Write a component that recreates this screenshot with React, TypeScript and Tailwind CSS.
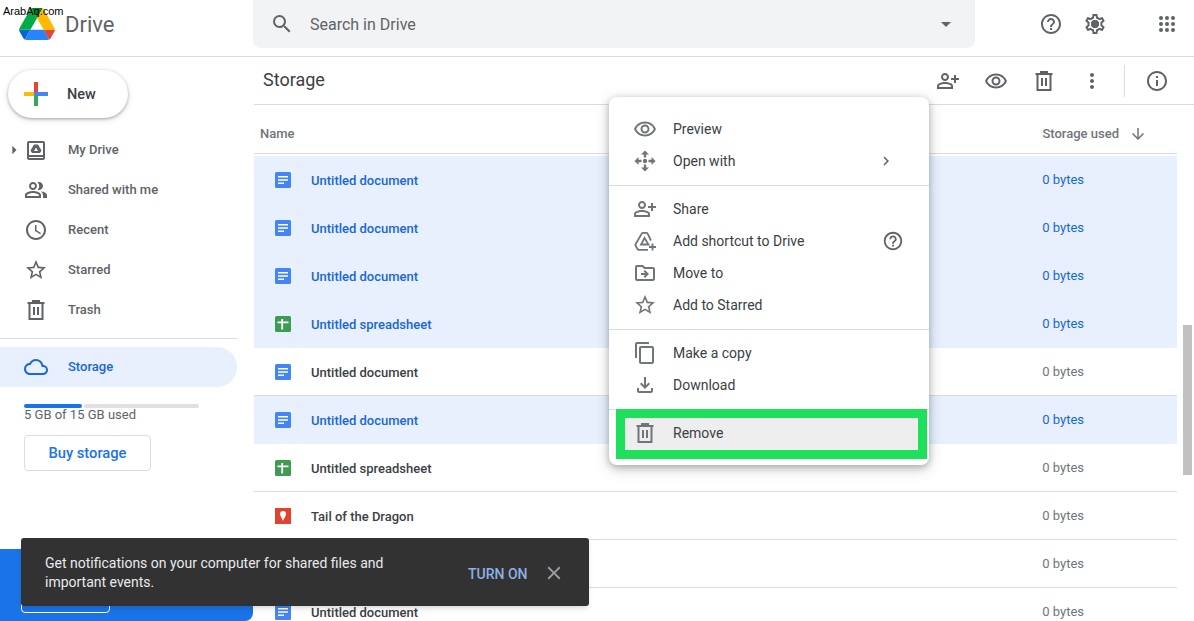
import {
  MdArrowDownward,
  MdArrowDropDown,
  MdArrowRight,
  MdChevronRight,
  MdClose,
  MdContentCopy,
  MdHelpOutline,
  MdInfoOutline,
  MdMoreVert,
  MdOutlineAccessTime,
  MdOutlineCloud,
  MdOutlineDriveFileMove,
  MdOutlineFileDownload,
  MdOutlinePeopleAlt,
  MdOutlinePersonAddAlt,
  MdOutlineRemoveRedEye,
  MdOutlineSettings,
  MdSearch,
  MdStarBorder,
} from "react-icons/md";

type FileKind = "doc" | "sheet" | "map";

interface FileRow {
  name: string;
  kind: FileKind;
  selected?: boolean;
}

// the ninth row sits behind the toast, so its name never shows
const FILES: FileRow[] = [
  { name: "Untitled document", kind: "doc", selected: true },
  { name: "Untitled document", kind: "doc", selected: true },
  { name: "Untitled document", kind: "doc", selected: true },
  { name: "Untitled spreadsheet", kind: "sheet", selected: true },
  { name: "Untitled document", kind: "doc" },
  { name: "Untitled document", kind: "doc", selected: true },
  { name: "Untitled spreadsheet", kind: "sheet" },
  { name: "Tail of the Dragon", kind: "map" },
  { name: "", kind: "doc" },
  { name: "Untitled document", kind: "doc" },
];

function TrashIcon({ className }: { className?: string }) {
  return (
    <svg viewBox="0 0 24 24" className={className} fill="none" stroke="currentColor" strokeWidth="2">
      <path d="M3.5 5h17M9 5V3h6v2M5.5 5v16h13V5M10 9v8M14 9v8" />
    </svg>
  );
}

function OpenWithIcon({ className }: { className?: string }) {
  return (
    <svg viewBox="0 0 24 24" className={className} fill="currentColor">
      <path d="M12 1.5 16 5.5H8zM12 22.5 8 18.5h8zM1.5 12 5.5 8v8zM22.5 12 18.5 16V8z" />
      <path d="M10.8 5h2.4v3.5h-2.4zM10.8 15.5h2.4V19h-2.4zM5 10.8h3.5v2.4H5zM15.5 10.8H19v2.4h-3.5z" />
      <circle cx="12" cy="12" r="2.2" />
    </svg>
  );
}

function AddToDriveIcon({ className }: { className?: string }) {
  return (
    <svg viewBox="0 0 24 24" className={className} fill="none" stroke="currentColor" strokeWidth="1.8">
      <path d="M18 11.5 14.6 4.6a1.5 1.5 0 0 0-1.3-.8H10a1.5 1.5 0 0 0-1.3.8L2.6 15.2a1.5 1.5 0 0 0 0 1.5l1.9 3.3a1.5 1.5 0 0 0 1.3.8H15" />
      <path d="M11.6 9 8 15.5h7.5z" />
      <path d="M19.5 14.5v7M16 18h7" />
    </svg>
  );
}

function MyDriveIcon({ className }: { className?: string }) {
  return (
    <svg viewBox="0 0 24 24" className={className} fill="currentColor">
      <path
        fillRule="evenodd"
        d="M5 3h14a2 2 0 0 1 2 2v15a2 2 0 0 1-2 2H5a2 2 0 0 1-2-2V5a2 2 0 0 1 2-2zm0 2v12h14V5H5zm0 14v1h14v-1H5z"
      />
      <path fillRule="evenodd" d="M10 6.5h4l3.5 6-1.5 2.5H8l-1.5-2.5zM12 9.5 10 13h4z" />
    </svg>
  );
}

function AppsIcon({ className }: { className?: string }) {
  return (
    <svg viewBox="0 0 24 24" className={className} fill="currentColor">
      {[6, 12, 18].map((y) =>
        [6, 12, 18].map((x) => <circle key={`${x}-${y}`} cx={x} cy={y} r="2" />),
      )}
    </svg>
  );
}

function DriveLogo() {
  return (
    <svg viewBox="0 0 87.3 78" className="h-[32px] w-[36px]">
      <path d="m6.6 66.85 3.85 6.65c.8 1.4 1.95 2.5 3.3 3.3l13.75-23.8h-27.5c0 1.55.4 3.1 1.2 4.5z" fill="#0066da" />
      <path d="m43.65 25-13.75-23.8c-1.35.8-2.5 1.9-3.3 3.3l-25.4 44a9.06 9.06 0 0 0 -1.2 4.5h27.5z" fill="#00ac47" />
      <path d="m73.55 76.8c1.35-.8 2.5-1.9 3.3-3.3l1.6-2.75 7.65-13.25c.8-1.4 1.2-2.95 1.2-4.5h-27.502l5.852 11.5z" fill="#ea4335" />
      <path d="m43.65 25 13.75-23.8c-1.35-.8-2.9-1.2-4.5-1.2h-18.5c-1.6 0-3.15.45-4.5 1.2z" fill="#00832d" />
      <path d="m59.8 53h-32.3l-13.75 23.8c1.35.8 2.9 1.2 4.5 1.2h50.8c1.6 0 3.15-.45 4.5-1.2z" fill="#2684fc" />
      <path d="m73.4 26.5-12.7-22c-.8-1.4-1.95-2.5-3.3-3.3l-13.75 23.8 16.15 28h27.45c0-1.55-.4-3.1-1.2-4.5z" fill="#ffba00" />
    </svg>
  );
}

function NewPlus() {
  return (
    <svg viewBox="0 0 24 24" className="h-6 w-6">
      <path d="M10 0h4v10h-4z" fill="#ea4335" />
      <path d="M14 10h10v4H14z" fill="#4285f4" />
      <path d="M10 14h4v10h-4z" fill="#34a853" />
      <path d="M0 10h10v4H0z" fill="#fbbc04" />
      <path d="M10 10h4v4h-4z" fill="#4285f4" />
    </svg>
  );
}

function FileIcon({ kind }: { kind: FileKind }) {
  if (kind === "sheet") {
    return (
      <svg viewBox="0 0 16 16" className="h-4 w-4 shrink-0">
        <rect width="16" height="16" rx="1.5" fill="#3e9c51" />
        <path d="M6.3 3h1.8v2.6h5.4v1.6H8.1v6.3H6.3V7.2H2.5V5.6h3.8z" fill="#fff" />
      </svg>
    );
  }
  if (kind === "map") {
    return (
      <svg viewBox="0 0 16 16" className="h-4 w-4 shrink-0">
        <rect width="16" height="16" fill="#e2432f" />
        <path d="M8 3a3 3 0 0 1 3 3c0 2-2 4-3 7-1-3-3-5-3-7a3 3 0 0 1 3-3z" fill="#fff" />
      </svg>
    );
  }
  return (
    <svg viewBox="0 0 16 16" className="h-4 w-4 shrink-0">
      <rect width="16" height="16" rx="1.5" fill="#4285f4" />
      <path d="M3 4h10v1.6H3zM3 7.2h10v1.6H3zM3 10.4h6V12H3z" fill="#fff" />
    </svg>
  );
}

function NavItem({ icon, label }: { icon: React.ReactNode; label: string }) {
  return (
    <div className="flex h-10 items-center pl-6 text-[13px] font-medium text-[#5f6368]">
      <span className="flex w-6 justify-center text-2xl">{icon}</span>
      <span className="ml-5">{label}</span>
    </div>
  );
}

function MenuItem({ icon, label, right }: { icon: React.ReactNode; label: string; right?: React.ReactNode }) {
  return (
    <div className="relative z-10 flex h-8 items-center pl-6 text-sm text-[#3c4043]">
      <span className="flex w-6 justify-center text-2xl text-[#70757a]">{icon}</span>
      <span className="ml-4 flex-1">{label}</span>
      {right}
    </div>
  );
}

function Divider() {
  return <div className="mt-2 mb-[7px] h-px bg-[#dadce0]" />;
}

export default function App() {
  return (
    <div className="relative flex h-[621px] w-[1194px] flex-col overflow-hidden bg-white font-['Roboto',sans-serif]">
      {/* top bar */}
      <header className="flex h-[57px] shrink-0 items-start border-b border-[#dadce0]">
        <div className="flex h-12 w-[253px] shrink-0 items-center pl-[19px]">
          <DriveLogo />
          <span className="ml-2.5 text-[22px] text-[#5f6368]">Drive</span>
        </div>
        <div className="flex h-12 w-[722px] items-center rounded-b-lg bg-[#f1f3f4] pl-[17px] text-[#5f6368]">
          <MdSearch className="text-2xl" />
          <span className="mt-0.5 ml-4 flex-1 text-base">Search in Drive</span>
          <MdArrowDropDown className="mr-[17px] text-[24px]" />
        </div>
        <div className="flex h-12 flex-1 items-center text-[#5f6368]">
          <MdHelpOutline className="ml-[64px] text-2xl" />
          <span className="relative ml-5 text-2xl">
            <MdOutlineSettings />
            <span className="absolute top-[8px] left-[8px] h-2 w-2 rounded-full bg-[#5f6368]" />
          </span>
          <AppsIcon className="ml-[48px] h-6 w-6" />
        </div>
      </header>

      <div className="flex min-h-0 flex-1">
        {/* sidebar */}
        <aside className="flex w-[254px] shrink-0 flex-col">
          <div className="mt-[13px] ml-2 flex h-12 w-[120px] items-center rounded-full bg-white pl-4 shadow-[0_1px_3px_rgba(60,64,67,0.4),0_2px_6px_rgba(60,64,67,0.15)]">
            <NewPlus />
            <span className="mt-0.5 ml-[19px] text-[14.5px] font-medium text-[#3c4043]">New</span>
          </div>
          <div className="relative mt-3">
            <MdArrowRight className="absolute left-[4px] top-[10px] text-[20px] text-[#5f6368]" />
            <NavItem icon={<MyDriveIcon className="h-6 w-6" />} label="My Drive" />
            <NavItem icon={<MdOutlinePeopleAlt />} label="Shared with me" />
            <NavItem icon={<MdOutlineAccessTime />} label="Recent" />
            <NavItem icon={<MdStarBorder />} label="Starred" />
            <NavItem icon={<TrashIcon className="h-6 w-6" />} label="Trash" />
          </div>
          <div className="mt-2 h-px w-[237px] bg-[#dadce0]" />
          <div className="mt-2 flex h-10 w-[237px] items-center rounded-r-[20px] bg-[#e8f0fe] pl-6 text-[13px] font-medium text-[#1967d2]">
            <span className="flex w-6 justify-center text-[26px]">
              <MdOutlineCloud />
            </span>
            <span className="ml-5">Storage</span>
          </div>
          <div className="mt-[17px] ml-6 flex h-1 w-[175px] gap-0.5">
            <div className="w-[58px] rounded-full bg-[#1a73e8]" />
            <div className="flex-1 rounded-full bg-[#e0e0e0]" />
          </div>
          <div className="mt-[2px] ml-6 h-[10px] text-[13px] leading-[10px] text-[#5f6368]">5 GB of 15 GB used</div>
          <div className="mt-[15px] ml-6 flex h-9 w-[127px] items-center justify-center rounded border border-[#dadce0] text-[14.7px] font-medium text-[#1a73e8]">
            Buy storage
          </div>
          <div className="mt-auto flex h-[72px] w-[253px] items-end rounded-br-lg bg-[#1a73e8] pb-2 pl-[21px]">
            <div className="h-9 w-[89px] rounded border border-white" />
          </div>
        </aside>

        {/* main */}
        <main className="flex min-w-0 flex-1 flex-col">
          <div className="flex h-12 shrink-0 items-center border-b border-[#dadce0] pl-[9px] text-[#5f6368]">
            <h1 className="mb-0.5 flex-1 text-lg text-[#3c4043]">Storage</h1>
            <MdOutlinePersonAddAlt className="text-2xl" />
            <MdOutlineRemoveRedEye className="ml-6 text-2xl" />
            <TrashIcon className="ml-6 h-6 w-6" />
            <MdMoreVert className="ml-6 text-2xl" />
            <div className="ml-[20px] h-8 w-px bg-[#dadce0]" />
            <MdInfoOutline className="mr-[25px] ml-5 text-2xl" />
          </div>
          <div className="flex min-h-0 flex-1">
            <div className="w-[923px] shrink-0">
              <div className="flex h-[49px] items-center border-b border-[#dadce0] pt-2.5 pr-[30px] pl-1.5 text-[13px] font-medium text-[#70757a]">
                <span className="flex-1">Name</span>
                <span>Storage used</span>
                <MdArrowDownward className="ml-2.5 text-lg" />
              </div>
              <div className="mt-0.5">
                {FILES.map((f, i) => (
                  <div
                    key={i}
                    className={`flex h-12 items-center pr-[93px] pl-[21px] ${
                      f.selected
                        ? "bg-[#e8f0fe] text-[#1967d2]"
                        : "border-b border-[#dadce0] text-[#70757a]"
                    }`}
                  >
                    <FileIcon kind={f.kind} />
                    <span
                      className={`mt-0.5 ml-5 flex-1 text-[13px] font-medium ${f.selected ? "" : "text-[#3c4043]"}`}
                    >
                      {f.name}
                    </span>
                    <span className="text-[13px]">0 bytes</span>
                  </div>
                ))}
              </div>
            </div>
            <div className="flex-1 pt-[220px] pl-1.5">
              <div className="h-[150px] w-[9px] bg-[#c1c1c1]" />
            </div>
          </div>
        </main>
      </div>

      {/* context menu */}
      <div className="absolute top-[97px] left-[609px] w-[320px] rounded-lg bg-white py-4 shadow-[0_2px_6px_rgba(60,64,67,0.3),0_4px_14px_rgba(60,64,67,0.25)]">
        <MenuItem icon={<MdOutlineRemoveRedEye />} label="Preview" />
        <MenuItem
          icon={<OpenWithIcon className="h-6 w-6" />}
          label="Open with"
          right={<MdChevronRight className="mr-[34px] text-lg text-[#5f6368]" />}
        />
        <Divider />
        <MenuItem icon={<MdOutlinePersonAddAlt />} label="Share" />
        <MenuItem
          icon={<AddToDriveIcon className="h-6 w-6" />}
          label="Add shortcut to Drive"
          right={<MdHelpOutline className="mr-[25px] text-[22px] text-[#5f6368]" />}
        />
        <MenuItem icon={<MdOutlineDriveFileMove />} label="Move to" />
        <MenuItem icon={<MdStarBorder />} label="Add to Starred" />
        <Divider />
        <MenuItem icon={<MdContentCopy />} label="Make a copy" />
        <MenuItem icon={<MdOutlineFileDownload />} label="Download" />
        <Divider />
        <MenuItem icon={<TrashIcon className="h-6 w-6" />} label="Remove" />
        {/* green highlight around Remove */}
        <div className="absolute top-[312px] left-[7px] h-[50px] w-[311px] border-[9px] border-[#1ee05b] bg-[#eeeeee]" />
      </div>

      {/* notification toast */}
      <div className="absolute top-[538px] left-[21px] flex h-[68px] w-[568px] items-center rounded-[3px] bg-[#323232] pl-6 shadow-md">
        <p className="mt-0.5 w-[360px] text-sm leading-[19px] text-[#e8eaed]">
          Get notifications on your computer for shared files and important events.
        </p>
        <span className="mt-1 ml-[63px] text-sm font-medium text-[#8fb0e6]">TURN ON</span>
        <MdClose className="mt-0.5 ml-[15px] text-[22px] text-[#9aa0a6]" />
      </div>

      {/* watermark */}
      <span className="absolute top-[3px] left-[3px] font-['Liberation_Sans',sans-serif] text-[11px] text-black">
        ArabAq.com
      </span>
    </div>
  );
}
